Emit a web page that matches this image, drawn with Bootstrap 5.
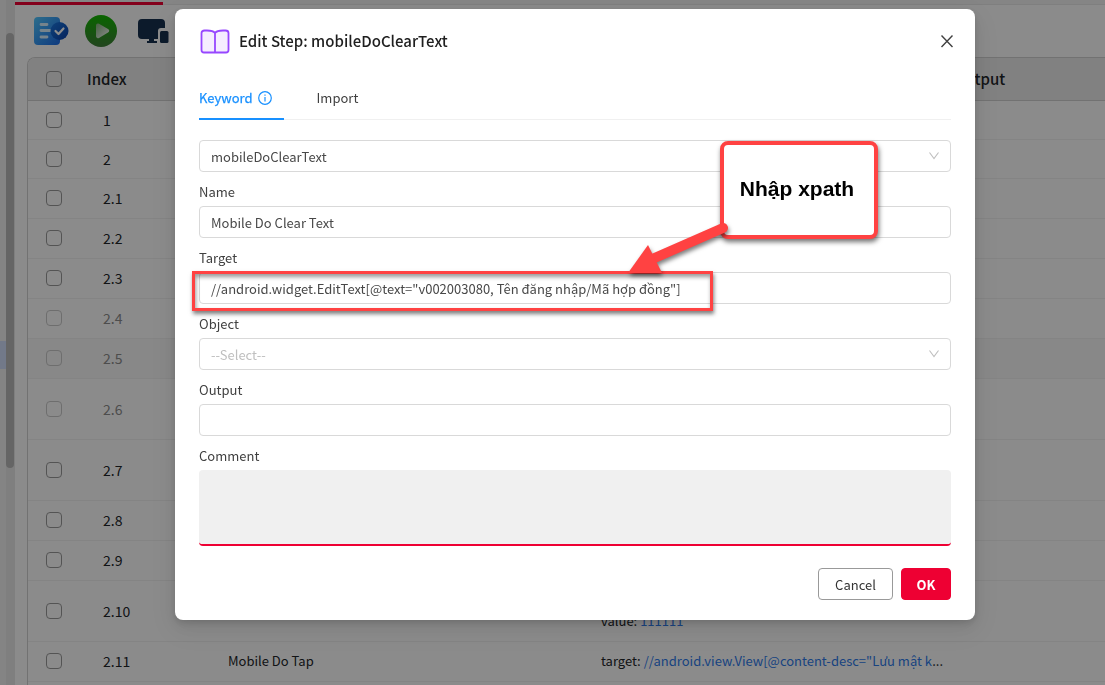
<!DOCTYPE html>
<html lang="vi">
<head>
<meta charset="utf-8">
<meta name="viewport" content="width=device-width, initial-scale=1">
<title>Edit Step</title>
<link href="https://cdn.jsdelivr.net/npm/bootstrap@5.3.0/dist/css/bootstrap.min.css" rel="stylesheet">
<style>
  body { font-family: "Noto Sans CJK SC", "Noto Sans", sans-serif; font-size: 13px; line-height: 20px; color: #262626; overflow: hidden; }
  .workspace { height: 100vh; overflow: hidden; background: #f2f2f2; }
  .side-strip { width: 15px; flex: none; background: #f0f0f0; position: relative; }
  .side-mark { position: absolute; left: 0; top: 341px; width: 6px; height: 28px; background: #cfdcfa; }
  .side-rail { width: 9px; background: #e8e8e8; margin-left: 6px; padding-top: 33px; height: 100vh; }
  .side-thumb { width: 8px; height: 435px; border-radius: 4px; background: #b9b9b9; }
  .tab-strip { height: 5px; background: #f2f2f2; border-bottom: 1px solid #e8e8e8; padding-top: 2px; }
  .tab-ink { width: 148px; height: 3px; background: #ee0033; }
  .main-pane { background: #fefefe; min-width: 0; }
  .tools { height: 52px; padding: 9px 0 0 18px; }
  .tools .tool-run { margin: 0 20px 0 13px; }
  .grid-frame { margin-left: 12px; border: 1px solid #d0d0d0; border-width: 1px 0 0 1px; border-radius: 8px 0 0 0; overflow: hidden; }
  .grid-frame table { table-layout: fixed; --bs-table-bg: transparent; }
  .grid-frame th { height: 42px; background: #ebebeb; font-size: 15px; font-weight: 500; padding: 0 7px; border-bottom: 1px solid #d0d0d0; vertical-align: middle; }
  .grid-frame td { height: 40px; padding: 0 8px; border-bottom: 1px solid #f0f0f0; white-space: nowrap; }
  .grid-frame tbody tr.first-rows td { height: 39px; }
  .grid-frame tbody tr.tall td { height: 61px; }
  .grid-frame tbody tr.off td { color: #8c8c8c; }
  .grid-frame tbody tr.off .form-check-input { border-color: #c8c8c8; }
  .grid-frame tr.shade td { background: #f7f7f7; }
  .grid-frame .form-check-input { width: 16px; height: 16px; margin: 0; border: 1px solid #9a9a9a; border-radius: 4px; display: block; background-color: transparent; }
  .grid-frame td.idx { padding-left: 23px; font-size: 14px; }
  .grid-frame a { color: #2f7bea; text-decoration: none; }
  .c-check { width: 52px; } .c-idx { width: 140px; } .c-name { width: 373px; } .c-data { width: 354px; }
  .grid-frame .pick { padding-left: 18px; }

  .veil { position: fixed; inset: 0; background: rgba(0,0,0,.45); padding: 9px 0 0 45px; }
  .step-dialog { max-width: 800px; margin: 0 auto; background: #fff; border-radius: 8px; padding: 15px 24px 20px; position: relative; box-shadow: 0 9px 28px 8px rgba(0,0,0,.05), 0 6px 16px rgba(0,0,0,.08), 0 3px 6px rgba(0,0,0,.12); }
  .step-title { font-size: 15px; line-height: 24px; font-weight: 500; color: #1f1f1f; }
  .close-x { border: 0; background: none; padding: 0; line-height: 0; margin-right: -3px; }
  .step-tabs { margin-top: 30px; border-bottom: 1px solid #f0f0f0; gap: 33px; margin-bottom: 20px; }
  .step-tabs .nav-link { color: #404040; padding: 0 0 10px; border-radius: 0; margin-bottom: -1px; line-height: 20px; border-bottom: 2px solid transparent; }
  .step-tabs .nav-link.active { color: #1890ff; border-color: #1890ff; background: none; padding-right: 12px; gap: 5px; -webkit-text-stroke: .25px #1890ff; }
  .step-label { display: block; height: 34px; line-height: 20px; padding-top: 10px; color: #404040; }
  .step-field { height: 32px; border: 1px solid #d9d9d9; border-radius: 4px; font-size: 13px; line-height: 20px; padding: 5px 11px; color: #484848; }
  select.step-field { padding: 6px 11px 4px; background-image: url("data:image/svg+xml,%3Csvg xmlns='http://www.w3.org/2000/svg' viewBox='0 0 12 12'%3E%3Cpath d='M1.5 2.5 6 8.5l4.500-6' fill='none' stroke='%23bfbfbf' stroke-width='1.100'/%3E%3C/svg%3E"); background-size: 12px 12px; background-position: right 10px center; }
  select.step-empty { color: #bfbfbf; }
  textarea.step-note { height: 76px; background: #f0f0f0; border: 0; border-bottom: 2px solid #ee0033; border-radius: 4px; resize: none; }
  .step-actions { margin-top: 22px; }
  .step-btn { height: 32px; border-radius: 4px; padding: 6px 0 4px; font-size: 13px; line-height: 20px; }
  .btn-cancel { border: 1px solid #999; color: #333; background: #fff; min-width: 75px; }
  .btn-ok { background: #ee0033; border: 1px solid #ee0033; color: #fff; font-weight: 700; min-width: 50px; }
  .hl-box { position: absolute; left: -7px; top: -1px; width: 521px; height: 40px; border: 3px solid #ff4242; box-shadow: 1px 3px 4px rgba(0,0,0,.5), inset 1px 3px 4px rgba(0,0,0,.4); pointer-events: none; }
  .callout-note { position: absolute; left: 545px; top: 132px; width: 158px; height: 98px; border: 4px solid #ff4242; border-radius: 8px; background: #fff; color: #000; font: bold 21px/24px "Liberation Sans", Arial, sans-serif; padding: 0 4px 2px 0; box-shadow: 1px 3px 5px rgba(0,0,0,.55); }
  .callout-arrow { position: absolute; left: 445px; top: 207px; overflow: visible; filter: drop-shadow(1px 3px 2px rgba(0,0,0,.5)); }
</style>
</head>
<body>
<div class="workspace d-flex">
  <div class="side-strip">
    <div class="side-mark"></div>
    <div class="side-rail"><div class="side-thumb"></div></div>
  </div>
  <main class="main-pane flex-grow-1">
    <div class="tab-strip"><div class="tab-ink"></div></div>
    <div class="tools d-flex align-items-start">
      <svg width="38" height="34" viewBox="0 0 38 34">
        <defs>
          <linearGradient id="doc" x1="0" y1="0" x2="1" y2="1"><stop offset="0" stop-color="#52c8ff"/><stop offset="1" stop-color="#1a6ae8"/></linearGradient>
          <linearGradient id="tick" x1="0" y1="0" x2="1" y2="1"><stop offset="0" stop-color="#1a78e0"/><stop offset="1" stop-color="#0a3fa8"/></linearGradient>
        </defs>
        <rect x="1" y="3" width="26" height="28" rx="4" fill="url(#doc)"/>
        <path d="M8 10.500h6M8 16.500h9M8 23h6" stroke="#d8f0ff" stroke-width="2.800" stroke-linecap="round"/>
        <circle cx="26.500" cy="17" r="9" fill="url(#tick)"/>
        <path d="m22.500 17 3 3 5-5.500" fill="none" stroke="#fff" stroke-width="2.200" stroke-linecap="round" stroke-linejoin="round"/>
      </svg>
      <svg class="tool-run" width="34" height="34" viewBox="0 0 34 34">
        <defs>
          <linearGradient id="go" x1="0" y1="0" x2="0" y2="1"><stop offset="0" stop-color="#12b800"/><stop offset="1" stop-color="#3f7d38"/></linearGradient>
          <linearGradient id="tri" x1="0" y1="0" x2="1" y2="1"><stop offset="0" stop-color="#7fae78"/><stop offset="1" stop-color="#fff"/></linearGradient>
        </defs>
        <circle cx="17" cy="17" r="16" fill="url(#go)"/>
        <path d="M12 11.500c0-2 1.500-2.500 3-1.800l9 5.300c1.600 1 1.600 2.600 0 3.600l-9 5.300c-1.500.8-3 0-3-1.800z" fill="url(#tri)"/>
      </svg>
      <svg width="34" height="34" viewBox="0 0 34 34" fill="#16304f">
        <path d="M4 5h19a4 4 0 0 1 4 4v5h-4a3 3 0 0 0-3 3v8H4a4 4 0 0 1-4-4V9a4 4 0 0 1 4-4z"/>
        <path d="M11 25h5v2h3v2h-10v-2h2z"/><rect x="22" y="17" width="8.500" height="12" rx="1.500"/>
      </svg>
    </div>
    <div class="grid-frame">
      <table class="table mb-0 align-middle">
        <colgroup><col class="c-check"><col class="c-idx"><col class="c-name"><col class="c-data"><col></colgroup>
        <thead><tr><th class="pick"><input class="form-check-input" type="checkbox" aria-label="All"></th><th>Index</th><th></th><th></th><th>Output</th></tr></thead>
        <tbody class="border-top-0">
          <tr class="first-rows"><td class="pick"><input class="form-check-input" type="checkbox" aria-label="1"></td><td class="idx">1</td><td></td><td></td><td></td></tr>
          <tr class="first-rows"><td class="pick"><input class="form-check-input" type="checkbox" aria-label="2"></td><td class="idx">2</td><td></td><td></td><td></td></tr>
          <tr><td class="pick"><input class="form-check-input" type="checkbox" aria-label="2.1"></td><td class="idx">2.1</td><td></td><td></td><td></td></tr>
          <tr><td class="pick"><input class="form-check-input" type="checkbox" aria-label="2.2"></td><td class="idx">2.2</td><td></td><td></td><td></td></tr>
          <tr><td class="pick"><input class="form-check-input" type="checkbox" aria-label="2.3"></td><td class="idx">2.3</td><td></td><td></td><td></td></tr>
          <tr class="off"><td class="pick"><input class="form-check-input" type="checkbox" aria-label="2.4"></td><td class="idx">2.4</td><td></td><td></td><td></td></tr>
          <tr class="off shade"><td class="pick"><input class="form-check-input" type="checkbox" aria-label="2.5"></td><td class="idx">2.5</td><td></td><td></td><td></td></tr>
          <tr class="off tall"><td class="pick"><input class="form-check-input" type="checkbox" aria-label="2.6"></td><td class="idx">2.6</td><td></td><td></td><td></td></tr>
          <tr class="tall"><td class="pick"><input class="form-check-input" type="checkbox" aria-label="2.7"></td><td class="idx">2.7</td><td></td><td></td><td></td></tr>
          <tr><td class="pick"><input class="form-check-input" type="checkbox" aria-label="2.8"></td><td class="idx">2.8</td><td></td><td></td><td></td></tr>
          <tr><td class="pick"><input class="form-check-input" type="checkbox" aria-label="2.9"></td><td class="idx">2.9</td><td></td><td></td><td></td></tr>
          <tr class="tall"><td class="pick"><input class="form-check-input" type="checkbox" aria-label="2.10"></td><td class="idx">2.10</td><td></td><td><br>value: <a href="#">111111</a></td><td></td></tr>
          <tr><td class="pick"><input class="form-check-input" type="checkbox" aria-label="2.11"></td><td class="idx">2.11</td><td>Mobile Do Tap</td><td>target: <a href="#">//android.view.View[@content-desc="Lưu mật k</a>...</td><td></td></tr>
          <tr><td></td><td></td><td></td><td></td><td></td></tr>
        </tbody>
      </table>
    </div>
  </main>
</div>

<div class="veil">
  <div class="step-dialog" role="dialog" aria-labelledby="stepTitle">
    <div class="d-flex align-items-center justify-content-between">
      <div class="d-flex align-items-center gap-2">
        <svg width="32" height="34" viewBox="0 0 32 34" fill="#f5edff" stroke="#9747ff" stroke-width="1.800" stroke-linejoin="round">
          <path d="M16 9C14.500 7 12 6.500 8 6.500H5.500Q2.500 6.500 2.500 9v17q0 2.500 2.500 2.500H16zM16 9c1.500-2 4-2.500 8-2.500h2.500q3 0 3 2.500v17q0 2.500-2.500 2.500H16z"/>
        </svg>
        <h1 class="step-title mb-0" id="stepTitle">Edit Step: mobileDoClearText</h1>
      </div>
      <button class="close-x" type="button" aria-label="Close">
        <svg width="14" height="14" viewBox="0 0 14 14"><path d="m1.500 1.500 11 11.500M12.500 1.500 1.500 13" stroke="#404040" stroke-width="1.400" fill="none"/></svg>
      </button>
    </div>
    <ul class="nav step-tabs">
      <li class="nav-item"><a class="nav-link active d-flex align-items-center" href="#">Keyword
        <svg width="14" height="14" viewBox="0 0 14 14"><circle cx="7" cy="7" r="6.300" fill="none" stroke="#1890ff" stroke-width="1.200"/><path d="M7 6v4.500M7 3.500v1.300" stroke="#1890ff" stroke-width="1.200"/></svg></a></li>
      <li class="nav-item"><a class="nav-link" href="#">Import</a></li>
    </ul>
    <form>
      <select class="form-select step-field" aria-label="Keyword"><option>mobileDoClearText</option></select>
      <label class="step-label" for="fName">Name</label>
      <input class="form-control step-field" id="fName" value="Mobile Do Clear Text">
      <label class="step-label" for="fTarget">Target</label>
      <div class="position-relative">
        <input class="form-control step-field" id="fTarget" value='//android.widget.EditText[@text="v002003080, Tên đăng nhập/Mã hợp đồng"]'>
        <div class="hl-box"></div>
      </div>
      <label class="step-label" for="fObject">Object</label>
      <select class="form-select step-field step-empty" id="fObject"><option>--Select--</option></select>
      <label class="step-label" for="fOutput">Output</label>
      <input class="form-control step-field" id="fOutput">
      <label class="step-label" for="fComment">Comment</label>
      <textarea class="form-control step-note" id="fComment"></textarea>
      <div class="step-actions d-flex justify-content-end gap-2">
        <button class="btn step-btn btn-cancel" type="button">Cancel</button>
        <button class="btn step-btn btn-ok" type="button">OK</button>
      </div>
    </form>
    <div class="callout-note d-flex align-items-center justify-content-center">Nhập xpath</div>
    <svg class="callout-arrow" width="110" height="65" viewBox="0 0 110 65" fill="#ff4242">
      <path d="M103 12 30 44" stroke="#ff4242" stroke-width="10" stroke-linecap="round"/>
      <path d="M8 57 28 29l14 28z"/>
    </svg>
  </div>
</div>
<script src="https://cdn.jsdelivr.net/npm/bootstrap@5.3.0/dist/js/bootstrap.bundle.min.js"></script>
</body>
</html>
